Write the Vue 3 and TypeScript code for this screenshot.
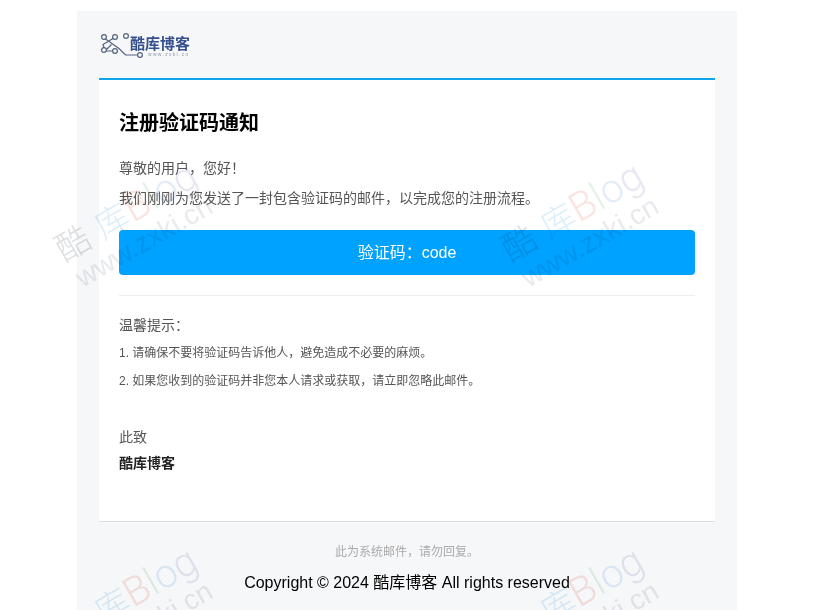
<script setup lang="ts">
const tiles: { x: number; y: number }[] = []
for (const y of [0, 385]) for (const x of [0, 446]) tiles.push({ x: x + 48, y: y + 234 })
const tips: string[] = [
  '1. 请确保不要将验证码告诉他人，避免造成不必要的麻烦。',
  '2. 如果您收到的验证码并非您本人请求或获取，请立即忽略此邮件。',
]
</script>

<template>
  <div class="page">
    <div class="marks" aria-hidden="true">
      <div
        v-for="(t, i) in tiles"
        :key="i"
        class="mark"
        :style="{ left: t.x + 'px', top: t.y + 'px' }"
      >
        <div class="mark-top"><span class="k1">酷</span><span class="k2">库</span><span class="b">B</span><span class="l">l</span><span class="o">o</span><span class="g">g</span></div>
        <div class="mark-url">www.zxki.cn</div>
      </div>
    </div>
    <main class="shell">
      <header class="brand">
        <svg class="brand-icon" width="45" height="25" viewBox="0 0 45 25" fill="none" stroke="#56637e" stroke-width="1.2">
          <circle cx="5" cy="4" r="2.400" />
          <circle cx="16" cy="4" r="2.400" />
          <circle cx="27" cy="3" r="2.400" />
          <circle cx="5" cy="17" r="2.400" />
          <circle cx="16" cy="18" r="2.400" />
          <circle cx="41" cy="22" r="2.400" />
          <path d="M6.500 6 20 15.500l6.500 6.500h12M14 5.500 4 11.500l1 3M7.500 16.500l5-5M7.500 18h6" />
        </svg>
        <div class="brand-text">
          <div class="brand-name">酷库博客</div>
          <div class="brand-url">www.zxki.cn</div>
        </div>
      </header>
      <section class="card">
        <h1>注册验证码通知</h1>
        <p class="line">尊敬的用户，您好！</p>
        <p class="line">我们刚刚为您发送了一封包含验证码的邮件，以完成您的注册流程。</p>
        <div class="code">验证码：code</div>
        <div class="rule"></div>
        <p class="tip-head">温馨提示：</p>
        <p v-for="t in tips" :key="t" class="tip">{{ t }}</p>
        <p class="regards">此致</p>
        <p class="sign">酷库博客</p>
      </section>
      <footer class="foot">
        <p class="note">此为系统邮件，请勿回复。</p>
        <p class="copy">Copyright © 2024 酷库博客 All rights reserved</p>
      </footer>
    </main>
  </div>
</template>

<style scoped>
.page {
  position: relative;
  height: 610px;
  overflow: hidden;
  background: #fff;
  font-family: "Liberation Sans", "Noto Sans CJK SC", sans-serif;
}
.marks {
  position: absolute;
  inset: 0;
  z-index: 1;
  pointer-events: none;
  mix-blend-mode: multiply;
}
.mark {
  position: absolute;
  transform: rotate(-30deg);
  transform-origin: 0 0;
  white-space: nowrap;
}
.mark-top {
  height: 40px;
  font-size: 40px;
  line-height: 40px;
  font-family: Roboto, "Liberation Sans", "Noto Sans CJK SC", sans-serif;
  font-weight: 300;
}
.k1 {
  font-size: 34px;
  color: #dcdfe2;
  margin-right: 11px;
}
.k2 {
  font-size: 34px;
  color: #dceef9;
}
.b { color: #f9e4e0; }
.l { color: #e4f3e8; }
.o { color: #e0edf9; }
.g { color: #e9e7f1; }
.mark-url {
  font-size: 28px;
  line-height: 30px;
  margin-left: 3px;
  color: #e8eaed;
}
.shell {
  width: 660px;
  margin: 11px 0 0 77px;
  padding: 0 22px;
  box-sizing: border-box;
  background: #f6f7f9;
}
.brand {
  height: 67px;
  display: flex;
  align-items: flex-start;
  padding-top: 25px;
  box-sizing: border-box;
  filter: blur(0.5px);
}
.brand-icon {
  margin-top: -3px;
  flex: none;
}
.brand-text {
  display: flex;
  flex-direction: column;
  margin-left: -14px;
}
.brand-name {
  font-size: 15px;
  line-height: 15px;
  font-weight: 700;
  color: #36508f;
}
.brand-url {
  font-size: 5px;
  line-height: 6px;
  letter-spacing: 1.3px;
  margin-left: 18px;
  color: #8e97a6;
}
.card {
  background: #fff;
  border-top: 2px solid #0ea5e9;
  border-bottom: 1px solid #ddd;
  padding: 29px 20px 0;
  height: 444px;
  box-sizing: border-box;
}
h1 {
  margin: 0 0 20px;
  font-size: 20px;
  line-height: 28px;
  font-weight: 700;
  color: #000;
}
.line {
  margin: 0 0 8px;
  font-size: 14px;
  line-height: 22px;
  color: #555;
}
.code {
  margin-top: 21px;
  height: 45px;
  border-radius: 4px;
  background: #00a2ff;
  color: #fff;
  font-size: 16px;
  line-height: 45px;
  text-align: center;
}
.rule {
  margin-top: 20px;
  border-top: 1px solid #eee;
}
.tip-head {
  margin: 18px 0 0;
  font-size: 14px;
  line-height: 22px;
  color: #555;
}
.tip {
  margin: 7px 0 0;
  font-size: 12px;
  line-height: 20px;
  color: #555;
}
.tip + .tip {
  margin-top: 8px;
}
.regards {
  margin: 35px 0 0;
  font-size: 14px;
  line-height: 22px;
  color: #555;
}
.sign {
  margin: 5px 0 0;
  font-size: 14px;
  line-height: 20px;
  font-weight: 700;
  color: #222;
}
.foot {
  text-align: center;
  padding-bottom: 20px;
}
.note {
  margin: 0;
  padding-top: 20px;
  font-size: 12px;
  line-height: 20px;
  color: #aaa;
}
.copy {
  margin: 9px 0 0;
  font-size: 16px;
  line-height: 24px;
  color: #000;
}
</style>
